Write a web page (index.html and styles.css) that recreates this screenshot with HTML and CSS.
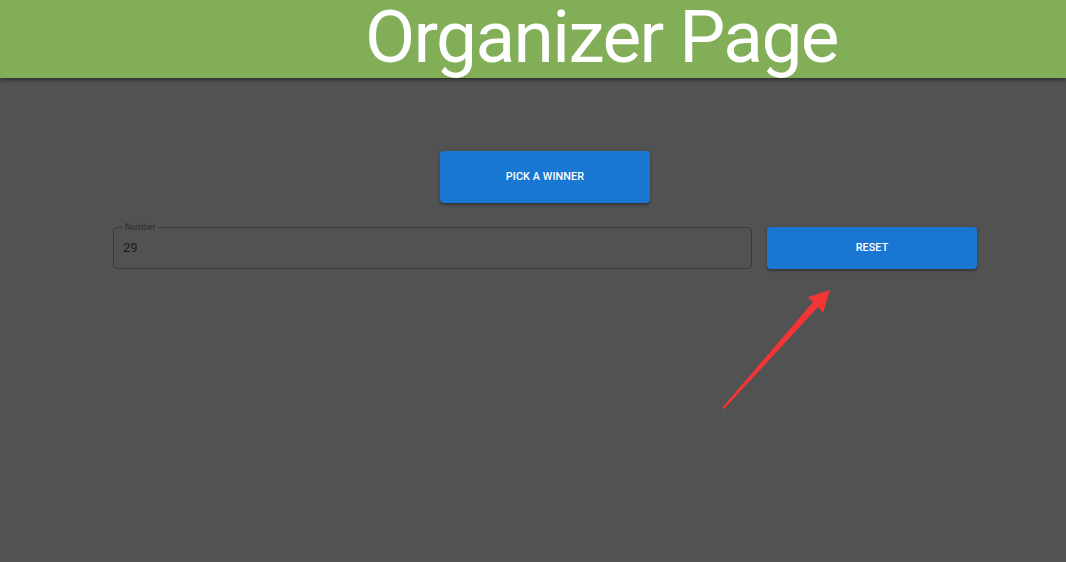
FILE: index.html
```html
<!DOCTYPE html>
<html>
<head>
<meta charset="utf-8">
<link rel="stylesheet" href="styles.css">
</head>
<body>
<header class="topbar">
  <h1 class="title">Organizer Page</h1>
</header>
<main class="content">
  <div class="pick-row">
    <button class="btn btn-pick">PICK A WINNER</button>
  </div>
  <div class="field-row">
    <fieldset class="field">
      <legend class="field-label">Number</legend>
      <div class="field-value">29</div>
    </fieldset>
    <button class="btn btn-reset">RESET</button>
  </div>
</main>
<svg class="arrow" width="1066" height="562" viewBox="0 0 1066 562">
  <polygon fill="#f23535" points="722,408 813,302 808,297 830,290 823,313 818,307 724,409"/>
</svg>
</body>
</html>
```
FILE: styles.css
```css
html, body {
  margin: 0;
  padding: 0;
}
body {
  background: #525252;
  width: 1066px;
  height: 562px;
  overflow: hidden;
  font-family: Roboto, "Liberation Sans", sans-serif;
  position: relative;
}
.topbar {
  height: 78px;
  background: #82ae57;
  box-shadow: 0 2px 4px rgba(0,0,0,0.45);
  display: flex;
  align-items: flex-start;
  padding-left: 365px;
  box-sizing: border-box;
}
.title {
  margin: 0;
  color: #ffffff;
  font-weight: 400;
  font-size: 73px;
  line-height: 74px;
  letter-spacing: -1.6px;
  white-space: nowrap;
}
.content {
  padding-top: 73px;
}
.pick-row {
  display: flex;
  padding-left: 440px;
}
.btn {
  border: none;
  background: #1976d2;
  color: #ffffff;
  font-family: Roboto, "Liberation Sans", sans-serif;
  font-weight: 500;
  font-size: 10.8px;
  letter-spacing: 0.1px;
  border-radius: 4px;
  box-shadow: 0 2px 2px rgba(0,0,0,0.25), 0 1px 4px rgba(0,0,0,0.15);
  width: 210px;
  padding: 0 0 2px 0;
  cursor: pointer;
}
.btn-pick {
  height: 52px;
}
.field-row {
  display: flex;
  margin-top: 24px;
  padding-left: 113px;
  gap: 15px;
  align-items: flex-start;
}
.field {
  width: 639px;
  box-sizing: border-box;
  margin: 0;
  margin-top: -5px;
  padding: 0 9px;
  border: 1px solid #3b3b3b;
  border-radius: 4px;
  height: 47px;
}
.field-label {
  font-size: 8.5px;
  color: #2e2e2e;
  padding: 0 3px;
  margin-left: -1px;
  line-height: 10px;
}
.field-value {
  font-size: 13px;
  color: #1a1a1a;
  margin-top: 8px;
  line-height: 16px;
}
.btn-reset {
  height: 42px;
}
.arrow {
  position: absolute;
  left: 0;
  top: 0;
  pointer-events: none;
}
```
